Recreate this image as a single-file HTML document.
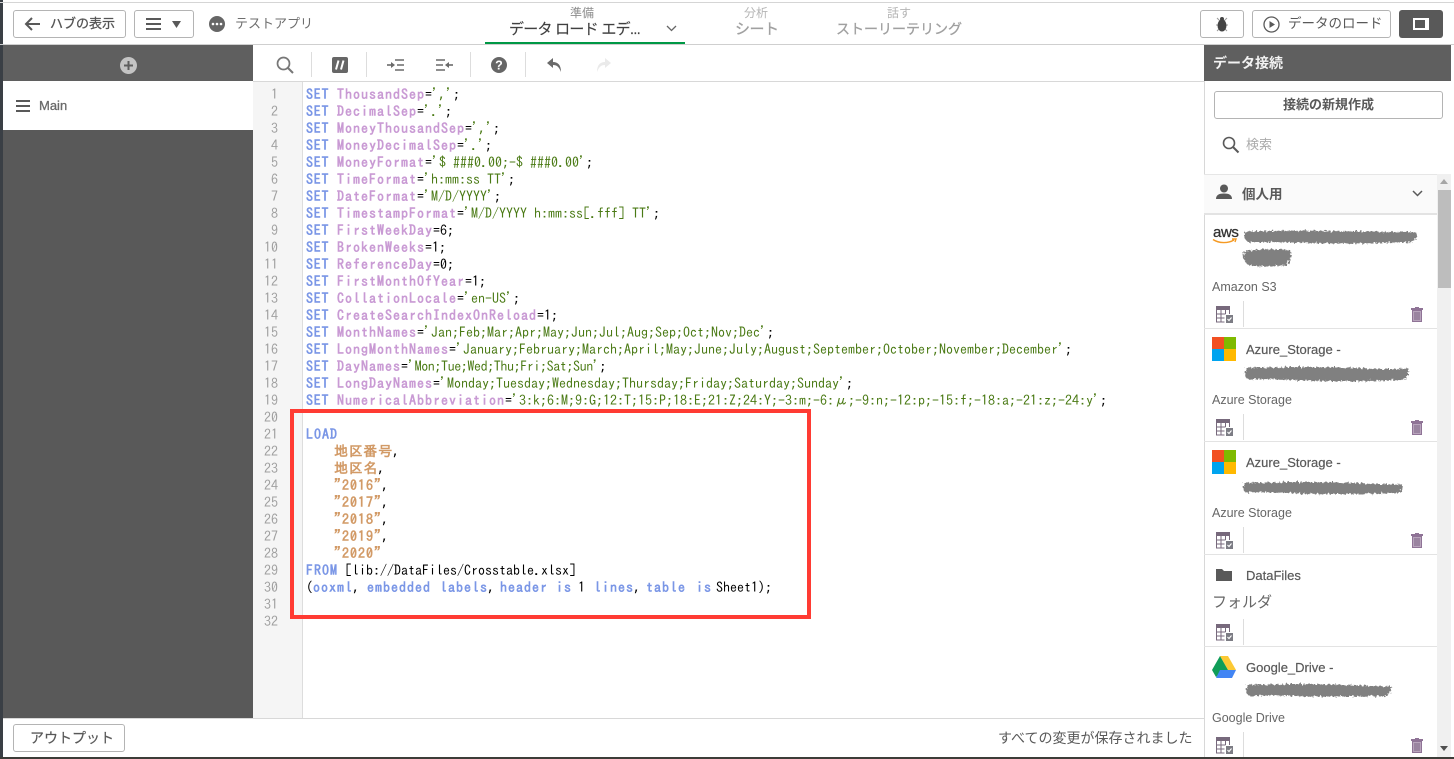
<!DOCTYPE html>
<html lang="ja"><head><meta charset="utf-8"><title>データロードエディタ</title>
<style>
html,body{margin:0;padding:0;width:1454px;height:759px;overflow:hidden;background:#fff}
body{position:relative;font-family:"Liberation Sans","Noto Sans CJK JP",sans-serif;color:#595959}
.a{position:absolute}
.t{position:absolute;white-space:pre;line-height:1}
.btn{position:absolute;box-sizing:border-box;border:1px solid #b4b4b4;border-radius:3px;background:#fff}
.code{position:absolute;left:306px;top:86px;font-family:"IPAGothic","Liberation Mono",monospace;font-size:14px;color:#000}
.code div{height:17px;line-height:17px;white-space:pre;position:relative}
.code b{letter-spacing:.75px;color:#7a96e6;font-weight:bold}
.code span b,.code b.w{letter-spacing:1px}
.code i{font-style:normal;font-weight:bold;color:#c99ad4;letter-spacing:1px}
.code u{text-decoration:none;color:#4a7a14}
.code em{font-style:normal;font-weight:bold;color:#d29a66;letter-spacing:1px}
.code span{position:absolute;top:0}
.nums{position:absolute;left:253px;top:86px;width:25px;text-align:right;font-family:"IPAGothic","Liberation Mono",monospace;font-size:14px;color:#a0a0a0}
.nums div{height:17px;line-height:17px}
.sep{position:absolute;left:1204px;width:233px;height:1px;background:#e3e3e3}
.vd{position:absolute;width:1px;background:#ddd}
.name{position:absolute;left:1246px;font-size:13px;line-height:16px;color:#595959;white-space:pre;-webkit-text-stroke:.2px #595959}
.lab{position:absolute;left:1212px;font-size:12.500px;line-height:16px;color:#666;white-space:pre}
</style></head>
<body>
<svg width="0" height="0" style="position:absolute">
<defs>
<filter id="rough" x="-5%" y="-20%" width="110%" height="140%"><feTurbulence type="fractalNoise" baseFrequency=".45" numOctaves="2" seed="4"/><feDisplacementMap in="SourceGraphic" scale="5"/></filter>
<symbol id="tbl" viewBox="0 0 17 17"><path d="M0 0h14v4H0z" fill="#77697c"/><path d="M.5 4v12h8M.5 8h9M.5 12h8M5 4v12M9.500 4v4M13.500 4v4" fill="none" stroke="#77697c" stroke-width="1"/><rect x="10" y="9" width="7" height="8" fill="#7c7c84"/><path d="M11.500 13l1.500 1.500 2.500-3" fill="none" stroke="#fff" stroke-width="1.100"/></symbol>
<symbol id="trash" viewBox="0 0 12 15"><path d="M4 0h4v1h4v2H0V1h4z" fill="#8f7396"/><path d="M1.500 3.500h9v11h-9z" fill="#b8a4bc" stroke="#8f7396" stroke-width="1"/><path d="M4 5v8M6 5v8M8 5v8" stroke="#7d6584" stroke-width="1"/></symbol>
</defs></svg>

<!-- window frame -->
<div class="a" style="left:0;top:0;width:3px;height:759px;background:#3a3f45"></div>
<div class="a" style="left:0;top:2px;width:1454px;height:1px;background:#d5d5d5"></div>
<div class="a" style="left:0;top:44px;width:1454px;height:1px;background:#cfcfcf"></div>

<!-- top bar left -->
<div class="btn" style="left:13px;top:10px;width:113px;height:28px"></div>
<svg class="a" style="left:24px;top:17px" width="18" height="14" viewBox="0 0 18 14"><path d="M16 7H2M8 1L2 7l6 6" fill="none" stroke="#595959" stroke-width="2"/></svg>
<div class="t" style="left:50px;top:17px;font-size:13px;color:#555;-webkit-text-stroke:.3px #555">ハブの表示</div>
<div class="btn" style="left:134px;top:10px;width:60px;height:28px"></div>
<div class="a" style="left:146px;top:18px;width:15px;height:2px;background:#595959;box-shadow:0 5px 0 #595959,0 10px 0 #595959"></div>
<svg class="a" style="left:172px;top:21px" width="9" height="7"><path d="M0 0h9L4.500 7z" fill="#595959"/></svg>
<svg class="a" style="left:209px;top:16px" width="16" height="16"><circle cx="8" cy="8" r="8" fill="#666"/><circle cx="4" cy="8" r="1.300" fill="#fff"/><circle cx="8" cy="8" r="1.300" fill="#fff"/><circle cx="12" cy="8" r="1.300" fill="#fff"/></svg>
<div class="t" style="left:235px;top:17px;font-size:13px;color:#6e6e6e">テストアプリ</div>

<!-- tabs -->
<div class="t" style="left:570px;top:7px;font-size:12px;color:#8c8c8c">準備</div>
<div class="t" style="left:509px;top:22px;font-size:15px;color:#404040;letter-spacing:-.75px;-webkit-text-stroke:.15px #404040">データ ロード エデ...</div>
<svg class="a" style="left:666px;top:25px" width="11" height="7"><path d="M1 1l4.500 4.500L10 1" fill="none" stroke="#666" stroke-width="1.300"/></svg>
<div class="a" style="left:485px;top:42px;width:200px;height:2px;background:#009845"></div>
<div class="t" style="left:744px;top:7px;font-size:12px;color:#b5b5b5">分析</div>
<div class="t" style="left:735px;top:22px;font-size:15px;color:#a0a0a0;letter-spacing:-.5px;-webkit-text-stroke:.3px #a0a0a0">シート</div>
<div class="t" style="left:887px;top:7px;font-size:12px;color:#b5b5b5">話す</div>
<div class="t" style="left:836px;top:22px;font-size:14px;color:#a0a0a0;-webkit-text-stroke:.3px #a0a0a0">ストーリーテリング</div>

<!-- top right -->
<div class="btn" style="left:1200px;top:10px;width:44px;height:28px"></div>
<svg class="a" style="left:1214px;top:15px" width="16" height="17" viewBox="0 0 16 17"><path d="M3 3l3 3M13 3l-3 3M2 10h3M14 10h-3M3 16l3-3M13 16l-3-3" stroke="#999" stroke-width="1"/><ellipse cx="8" cy="10.500" rx="4.500" ry="6" fill="#444"/><circle cx="8" cy="4" r="2" fill="#444"/></svg>
<div class="btn" style="left:1252px;top:10px;width:139px;height:28px"></div>
<svg class="a" style="left:1263px;top:16px" width="17" height="17"><circle cx="8.500" cy="8.500" r="7.500" fill="none" stroke="#595959" stroke-width="1.300"/><path d="M6.500 5v7l5.500-3.500z" fill="#595959"/></svg>
<div class="t" style="left:1288px;top:17px;font-size:13.500px;color:#595959">データのロード</div>
<div class="a" style="left:1399px;top:10px;width:44px;height:28px;background:#595959;border-radius:3px"></div>
<div class="a" style="left:1413px;top:18px;box-sizing:border-box;width:16px;height:12px;border:2px solid #fff;border-right-width:4px;background:#595959"></div>

<!-- left panel -->
<div class="a" style="left:3px;top:45px;width:250px;height:36px;background:#5f5f5f"></div>
<svg class="a" style="left:120px;top:57px" width="17" height="17"><circle cx="8.500" cy="8.500" r="8.500" fill="#c4c4c4"/><path d="M8.500 4v9M4 8.500h9" stroke="#5f5f5f" stroke-width="2"/></svg>
<div class="a" style="left:3px;top:81px;width:250px;height:49px;background:#fff"></div>
<div class="a" style="left:16px;top:100px;width:14px;height:2px;background:#595959;box-shadow:0 5px 0 #595959,0 10px 0 #595959"></div>
<div class="t" style="left:39px;top:99px;font-size:13px;color:#6a6a6a;-webkit-text-stroke:.3px #6a6a6a">Main</div>
<div class="a" style="left:3px;top:130px;width:250px;height:588px;background:#595959"></div>

<!-- toolbar -->
<div class="a" style="left:253px;top:81px;width:951px;height:1px;background:#d8d8d8"></div>
<svg class="a" style="left:276px;top:56px" width="19" height="18"><circle cx="7.500" cy="7.500" r="6" fill="none" stroke="#777" stroke-width="1.700"/><path d="M12 12l5 5" stroke="#777" stroke-width="2"/></svg>
<div class="vd" style="left:311px;top:52px;height:25px"></div>
<div class="a" style="left:332px;top:57px;width:16px;height:16px;background:#666;border-radius:2px"></div>
<svg class="a" style="left:332px;top:57px" width="16" height="16"><path d="M6.500 3.500L4 12.500M11.500 3.500L9 12.500" stroke="#fff" stroke-width="2"/></svg>
<div class="vd" style="left:366px;top:52px;height:25px"></div>
<svg class="a" style="left:387px;top:58px" width="17" height="14"><path d="M8 2h9M10 7h7M8 12h9" stroke="#6a6a6a" stroke-width="1.600"/><path d="M0 7h5" stroke="#6a6a6a" stroke-width="1.600"/><path d="M4 4l4 3-4 3z" fill="#6a6a6a"/></svg>
<svg class="a" style="left:436px;top:58px" width="17" height="14"><path d="M0 2h9M0 7h7M0 12h9" stroke="#6a6a6a" stroke-width="1.600"/><path d="M12 7h5" stroke="#6a6a6a" stroke-width="1.600"/><path d="M13 4L9 7l4 3z" fill="#6a6a6a"/></svg>
<div class="vd" style="left:470px;top:52px;height:25px"></div>
<svg class="a" style="left:491px;top:57px" width="16" height="16"><circle cx="8" cy="8" r="8" fill="#666"/><text x="8" y="12.500" font-size="12.500" font-weight="bold" text-anchor="middle" fill="#fff" font-family="Liberation Sans">?</text></svg>
<div class="vd" style="left:525px;top:52px;height:25px"></div>
<svg class="a" style="left:547px;top:58px" width="15" height="14" viewBox="0 0 15 14"><path d="M6 0L0 5l6 5V7c4 0 6 2 8 7 0-7-3-10-8-10z" fill="#6a6a6a"/></svg>
<svg class="a" style="left:596px;top:58px" width="15" height="14" viewBox="0 0 15 14"><path d="M9 0l6 5-6 5V7C5 7 3 9 1 14c0-7 3-10 8-10z" fill="#eaeaea"/></svg>

<!-- gutter -->
<div class="a" style="left:253px;top:82px;width:49px;height:636px;background:#f5f5f5"></div>
<div class="a" style="left:302px;top:82px;width:1px;height:636px;background:#ddd"></div>
<div class="nums"><div>1</div><div>2</div><div>3</div><div>4</div><div>5</div><div>6</div><div>7</div><div>8</div><div>9</div><div>10</div><div>11</div><div>12</div><div>13</div><div>14</div><div>15</div><div>16</div><div>17</div><div>18</div><div>19</div><div>20</div><div>21</div><div>22</div><div>23</div><div>24</div><div>25</div><div>26</div><div>27</div><div>28</div><div>29</div><div>30</div><div>31</div><div>32</div></div>

<!-- code -->
<div class="code">
<div><b>SET </b><i>ThousandSep</i>=<u>','</u>;</div>
<div><b>SET </b><i>DecimalSep</i>=<u>'.'</u>;</div>
<div><b>SET </b><i>MoneyThousandSep</i>=<u>','</u>;</div>
<div><b>SET </b><i>MoneyDecimalSep</i>=<u>'.'</u>;</div>
<div><b>SET </b><i>MoneyFormat</i>=<u>'$ ###0.00;-$ ###0.00'</u>;</div>
<div><b>SET </b><i>TimeFormat</i>=<u>'h:mm:ss TT'</u>;</div>
<div><b>SET </b><i>DateFormat</i>=<u>'M/D/YYYY'</u>;</div>
<div><b>SET </b><i>TimestampFormat</i>=<u>'M/D/YYYY h:mm:ss[.fff] TT'</u>;</div>
<div><b>SET </b><i>FirstWeekDay</i>=6;</div>
<div><b>SET </b><i>BrokenWeeks</i>=1;</div>
<div><b>SET </b><i>ReferenceDay</i>=0;</div>
<div><b>SET </b><i>FirstMonthOfYear</i>=1;</div>
<div><b>SET </b><i>CollationLocale</i>=<u>'en-US'</u>;</div>
<div><b>SET </b><i>CreateSearchIndexOnReload</i>=1;</div>
<div><b>SET </b><i>MonthNames</i>=<u>'Jan;Feb;Mar;Apr;May;Jun;Jul;Aug;Sep;Oct;Nov;Dec'</u>;</div>
<div><b>SET </b><i>LongMonthNames</i>=<u>'January;February;March;April;May;June;July;August;September;October;November;December'</u>;</div>
<div><b>SET </b><i>DayNames</i>=<u style="letter-spacing:-.4px">'Mon;Tue;Wed;Thu;Fri;Sat;Sun'</u>;</div>
<div><b>SET </b><i>LongDayNames</i>=<u>'Monday;Tuesday;Wednesday;Thursday;Friday;Saturday;Sunday'</u>;</div>
<div><b>SET </b><i>NumericalAbbreviation</i>=<u>'3:k;6:M;9:G;12:T;15:P;18:E;21:Z;24:Y;-3:m;-6:μ;-9:n;-12:p;-15:f;-18:a;-21:z;-24:y'</u>;</div>
<div></div>
<div><b class="w">LOAD</b></div>
<div>    <em style="letter-spacing:.7px">地区番号</em>,</div>
<div>    <em style="letter-spacing:.7px">地区名</em>,</div>
<div>    <em>"2016"</em>,</div>
<div>    <em>"2017"</em>,</div>
<div>    <em>"2018"</em>,</div>
<div>    <em>"2019"</em>,</div>
<div>    <em>"2020"</em></div>
<div><b class="w">FROM</b> [lib://DataFiles/Crosstable.xlsx]</div>
<div>(<span style="left:7px"><b>ooxml</b>,</span><span style="left:61px"><b>embedded</b></span><span style="left:134px"><b>labels</b>,</span><span style="left:194px"><b>header</b></span><span style="left:250px"><b>is</b></span><span style="left:272px">1</span><span style="left:288px"><b>lines</b>,</span><span style="left:340px"><b>table</b></span><span style="left:390px"><b>is</b></span><span style="left:410px">Sheet1);</span></div>
</div>

<!-- red highlight -->
<div class="a" style="left:290px;top:409px;width:521px;height:210px;box-sizing:border-box;border:4px solid #ff3b33"></div>

<!-- right panel -->
<div class="a" style="left:1204px;top:45px;width:1px;height:712px;background:#d8d8d8"></div>
<div class="a" style="left:1204px;top:45px;width:247px;height:36px;background:#5f5f5f"></div>
<div class="t" style="left:1213px;top:56px;font-size:14px;font-weight:bold;color:#f2f2f2">データ接続</div>
<div class="btn" style="left:1214px;top:91px;width:229px;height:28px"></div>
<div class="t" style="left:1283px;top:98px;font-size:13px;font-weight:bold;color:#595959">接続の新規作成</div>
<svg class="a" style="left:1222px;top:136px" width="18" height="18"><circle cx="7" cy="7" r="5.500" fill="none" stroke="#595959" stroke-width="1.600"/><path d="M11 11l5.500 5.500" stroke="#595959" stroke-width="2"/></svg>
<div class="t" style="left:1246px;top:138px;font-size:13px;color:#aaa">検索</div>

<div class="a" style="left:1204px;top:174px;width:233px;height:41px;background:#fafafa;border-top:1px solid #e6e6e6;border-bottom:2px solid #e3e3e3;box-sizing:border-box"></div>
<svg class="a" style="left:1216px;top:184px" width="16" height="16"><circle cx="8" cy="4.500" r="4" fill="#595959"/><path d="M0 15c0-4 3-5.500 8-5.500s8 1.500 8 5.500z" fill="#595959"/></svg>
<div class="t" style="left:1242px;top:188px;font-size:13.500px;font-weight:bold;color:#595959">個人用</div>
<svg class="a" style="left:1412px;top:190px" width="11" height="7"><path d="M1 1l4.500 4.500L10 1" fill="none" stroke="#595959" stroke-width="1.500"/></svg>

<!-- scrollbar -->
<div class="a" style="left:1437px;top:174px;width:14px;height:583px;background:#f0f0f0"></div>
<div class="a" style="left:1438px;top:190px;width:13px;height:98px;background:#bdbdbd"></div>
<svg class="a" style="left:1440px;top:179px" width="9" height="5"><path d="M0 5h8L4 0z" fill="#a6a6a6"/></svg>
<svg class="a" style="left:1440px;top:746px" width="9" height="5"><path d="M0 0h8L4 5z" fill="#505050"/></svg>

<!-- separators -->
<div class="sep" style="top:328px"></div>
<div class="sep" style="top:441px"></div>
<div class="sep" style="top:554px"></div>
<div class="sep" style="top:646px"></div>

<!-- card 1 -->
<div class="t" style="left:1213px;top:225px;font-size:15px;color:#333;-webkit-text-stroke:.3px #333;letter-spacing:-.4px">aws</div>
<svg class="a" style="left:1212px;top:238px" width="25" height="7"><path d="M1 1.500c6 4 15 4 21 .5M20 1h4l-1 3" fill="none" stroke="#f59a23" stroke-width="1.400"/></svg>
<svg class="a" style="left:1240px;top:227px" width="180" height="42"><g filter="url(#rough)"><path d="M5 5 Q40 3 90 4 T176 5 Q178 10 172 15 Q120 17 80 16 T8 15 Q2 10 5 5Z" fill="#808080"/><path d="M5 24 Q25 21 50 23 Q53 30 47 38 Q25 41 8 38 Q1 31 5 24Z" fill="#808080"/></g></svg>
<div class="lab" style="top:279px">Amazon S3</div>
<svg class="a" style="left:1216px;top:306px" width="17" height="17"><use href="#tbl"/></svg>
<div class="vd" style="left:1243px;top:301px;height:26px"></div>
<svg class="a" style="left:1411px;top:307px" width="12" height="15"><use href="#trash"/></svg>

<!-- card 2 -->
<svg class="a" style="left:1212px;top:337px" width="24" height="24"><rect width="12" height="12" fill="#f25022"/><rect x="12" width="12" height="12" fill="#7fba00"/><rect y="12" width="12" height="12" fill="#00a4ef"/><rect x="12" y="12" width="12" height="12" fill="#ffb900"/></svg>
<div class="name" style="top:342px">Azure_Storage -</div>
<svg class="a" style="left:1243px;top:365px" width="168" height="18"><path filter="url(#rough)" d="M3 3 Q60 1 110 3 T165 3 Q167 10 160 15 Q100 17 50 15 T5 15 Q0 9 3 3Z" fill="#808080"/></svg>
<div class="lab" style="top:392px">Azure Storage</div>
<svg class="a" style="left:1216px;top:419px" width="17" height="17"><use href="#tbl"/></svg>
<div class="vd" style="left:1243px;top:414px;height:26px"></div>
<svg class="a" style="left:1411px;top:420px" width="12" height="15"><use href="#trash"/></svg>

<!-- card 3 -->
<svg class="a" style="left:1212px;top:450px" width="24" height="24"><rect width="12" height="12" fill="#f25022"/><rect x="12" width="12" height="12" fill="#7fba00"/><rect y="12" width="12" height="12" fill="#00a4ef"/><rect x="12" y="12" width="12" height="12" fill="#ffb900"/></svg>
<div class="name" style="top:455px">Azure_Storage -</div>
<svg class="a" style="left:1241px;top:480px" width="164" height="16"><path filter="url(#rough)" d="M3 3 Q60 1 110 3 T161 4 Q163 9 157 13 Q100 15 50 13 T5 13 Q0 8 3 3Z" fill="#808080"/></svg>
<div class="lab" style="top:505px">Azure Storage</div>
<svg class="a" style="left:1216px;top:532px" width="17" height="17"><use href="#tbl"/></svg>
<div class="vd" style="left:1243px;top:527px;height:26px"></div>
<svg class="a" style="left:1411px;top:533px" width="12" height="15"><use href="#trash"/></svg>

<!-- card 4 -->
<svg class="a" style="left:1216px;top:569px" width="16" height="12"><path d="M0 0h6l2 2h8v10H0z" fill="#595959"/></svg>
<div class="name" style="top:568px">DataFiles</div>
<div class="t" style="left:1212px;top:595px;font-size:15px;color:#666">フォルダ</div>
<svg class="a" style="left:1216px;top:624px" width="17" height="17"><use href="#tbl"/></svg>
<div class="vd" style="left:1243px;top:619px;height:26px"></div>

<!-- card 5 -->
<svg class="a" style="left:1212px;top:656px" width="24" height="22" viewBox="0 0 24 22"><path d="M8 0h8l8 14h-8z" fill="#fcc934"/><path d="M8 0l8 14-4 0L4 21 0 14z" fill="#0f9d58"/><path d="M4 22l4-8h16l-4 8z" fill="#4285f4"/></svg>
<div class="name" style="top:660px">Google_Drive -</div>
<svg class="a" style="left:1244px;top:682px" width="150" height="18"><path filter="url(#rough)" d="M3 3 Q50 1 100 3 T147 4 Q149 9 143 14 Q90 15 50 14 T5 14 Q0 9 3 3Z" fill="#808080"/></svg>
<div class="lab" style="top:710px">Google Drive</div>
<svg class="a" style="left:1216px;top:737px" width="17" height="17"><use href="#tbl"/></svg>
<div class="vd" style="left:1243px;top:732px;height:25px"></div>
<svg class="a" style="left:1411px;top:738px" width="12" height="15"><use href="#trash"/></svg>

<!-- bottom bar -->
<div class="a" style="left:3px;top:718px;width:1201px;height:1px;background:#d8d8d8"></div>
<div class="btn" style="left:13px;top:724px;width:112px;height:28px"></div>
<div class="t" style="left:30px;top:731px;font-size:14px;color:#595959;-webkit-text-stroke:.2px #595959">アウトプット</div>
<div class="t" style="left:998px;top:731px;font-size:14px;color:#595959">すべての変更が保存されました</div>
<div class="a" style="left:0;top:757px;width:1454px;height:2px;background:#3c3c38"></div>
<div class="a" style="left:1451px;top:45px;width:3px;height:712px;background:#fff"></div>
</body></html>
